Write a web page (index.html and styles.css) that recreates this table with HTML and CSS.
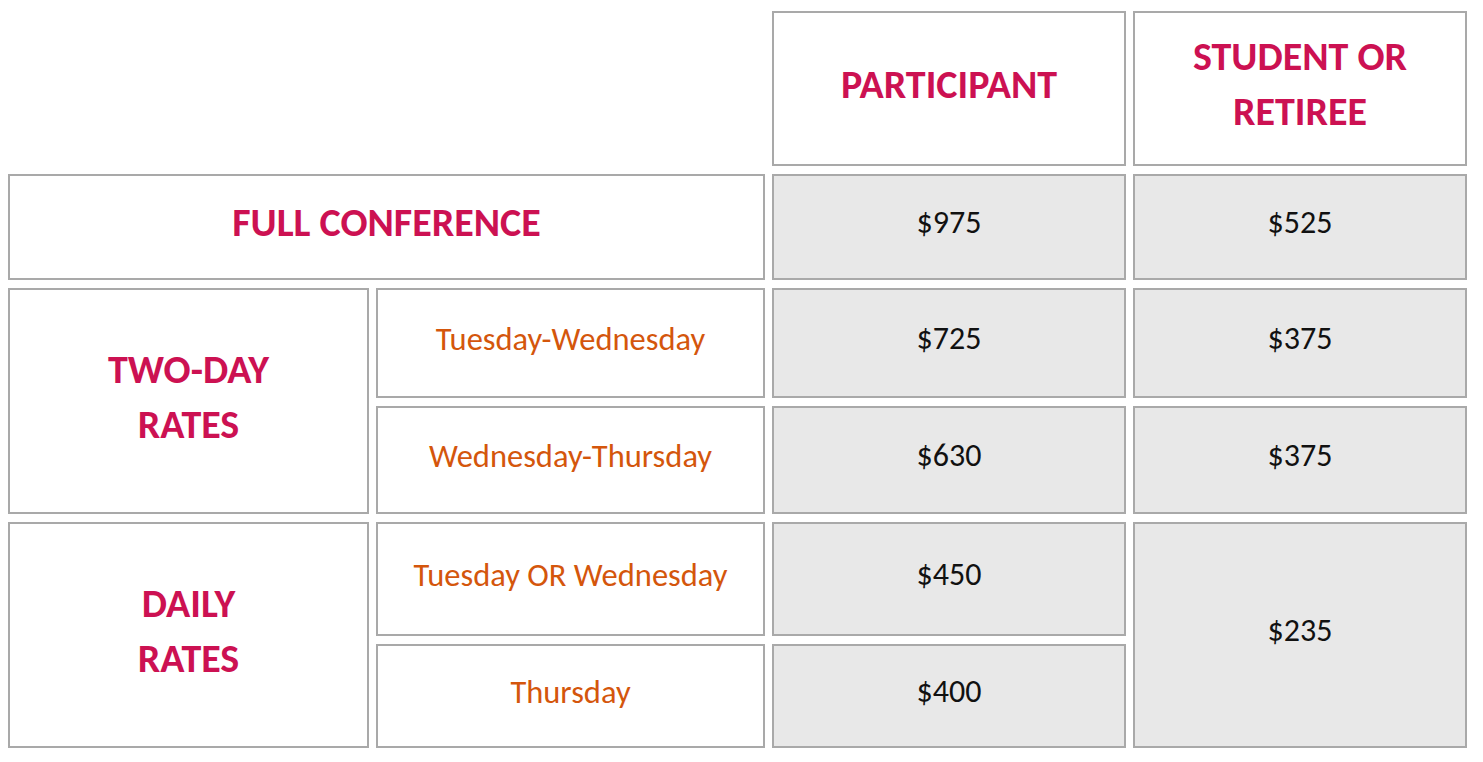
FILE: index.html
```html
<!DOCTYPE html>
<html lang="en">
<head>
<meta charset="utf-8">
<title>Conference Rates</title>
<link rel="stylesheet" href="styles.css">
</head>
<body>
<div class="page">
  <div class="rates">
    <div class="blank"></div>
    <div class="cell head c3">PARTICIPANT</div>
    <div class="cell head c4">STUDENT OR<br>RETIREE</div>

    <div class="cell head full">FULL CONFERENCE</div>
    <div class="cell price">$975</div>
    <div class="cell price">$525</div>

    <div class="cell head group two">TWO-DAY<br>RATES</div>
    <div class="cell day">Tuesday-Wednesday</div>
    <div class="cell price">$725</div>
    <div class="cell price">$375</div>
    <div class="cell day">Wednesday-Thursday</div>
    <div class="cell price">$630</div>
    <div class="cell price">$375</div>

    <div class="cell head group daily">DAILY<br>RATES</div>
    <div class="cell day">Tuesday OR Wednesday</div>
    <div class="cell price">$450</div>
    <div class="cell price tall">$235</div>
    <div class="cell day">Thursday</div>
    <div class="cell price">$400</div>
  </div>
</div>
</body>
</html>
```

FILE: styles.css
```css
html, body {
  margin: 0;
  padding: 0;
  background: #ffffff;
}

.page {
  padding: 11px 0 0 8px;
  font-family: Carlito, Calibri, "Open Sans", sans-serif;
}

.rates {
  display: grid;
  grid-template-columns: 361px 389px 354px 334px;
  grid-template-rows: 155px 106px 110px 108px 114px 104px;
  column-gap: 7px;
  row-gap: 8px;
}

.blank {
  grid-column: 1 / 3;
}

.cell {
  box-sizing: border-box;
  border: 2px solid #a9a9a9;
  padding-bottom: 9px;
  display: flex;
  align-items: center;
  justify-content: center;
  text-align: center;
}

.head {
  color: #cc1152;
  font-weight: 700;
  font-size: 40px;
  line-height: 55px;
}

.full {
  grid-column: 1 / 3;
}

.group {
  grid-row: span 2;
}

.day {
  color: #d4560c;
  font-size: 32.5px;
}

.price {
  background: #e8e8e8;
  color: #111111;
  font-size: 32px;
}

.tall {
  grid-row: span 2;
}
```
